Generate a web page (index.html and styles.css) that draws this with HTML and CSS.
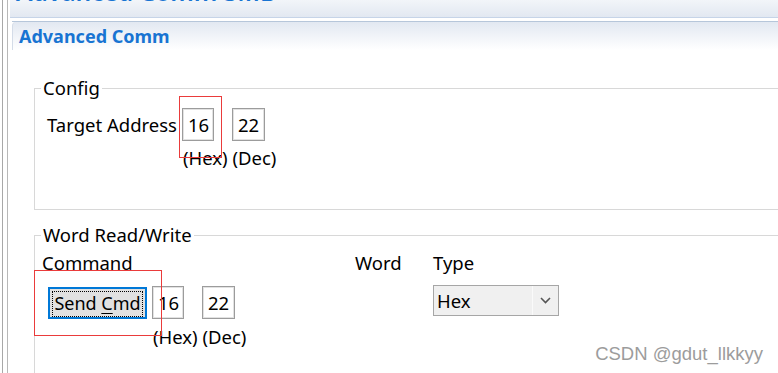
FILE: index.html
```html
<!DOCTYPE html>
<html lang="en">
<head>
  <meta charset="UTF-8" />
  <meta name="viewport" content="width=device-width, initial-scale=1.0"/>
  <title>Advanced Comm SMB</title>
  <link rel="stylesheet" href="styles.css">
</head>
<body>
  <div class="window">
    <div class="main">
      <div class="titlebar"><h1>Advanced Comm SMB</h1></div>

      <div class="section">
        <div class="section-head">Advanced Comm</div>

        <fieldset class="group config">
          <legend>Config</legend>
          <div class="addr-row">
            <span class="addr-label">Target Address</span>
            <span class="box hex">16</span>
            <span class="box dec">22</span>
          </div>
          <div class="units addr-units">(Hex) (Dec)</div>
        </fieldset>

        <fieldset class="group words">
          <legend>Word Read/Write</legend>
          <div class="word-grid">
            <span class="head">Command</span>
            <span class="head">Word</span>
            <span class="head">Type</span>

            <div class="cmd-cell">
              <button class="send-btn"><span class="focus">Send <u>C</u>md</span></button>
              <span class="box hex">16</span>
              <span class="box dec">22</span>
            </div>
            <span></span>
            <div class="combo">
              <span class="combo-text">Hex</span>
              <span class="combo-arrow">
                <svg width="11" height="7" viewBox="0 0 11 7"><path d="M1 1 L5.5 5.5 L10 1" fill="none" stroke="#555" stroke-width="1.6"/></svg>
              </span>
            </div>

            <div class="units cmd-units">(Hex) (Dec)</div>
          </div>
        </fieldset>
      </div>
    </div>
  </div>

  <!-- red marks drawn over the screenshot -->
  <div class="mark mark-addr"></div>
  <div class="mark mark-cmd"></div>

  <div class="watermark">CSDN @gdut_llkkyy</div>
</body>
</html>
```

FILE: styles.css
```css
body {
  margin: 0;
  height: 373px;
  overflow: hidden;
  background: #fff;
  font-family: 'Noto Sans', 'Open Sans', sans-serif;
  color: #000;
  position: relative;
}

.window {
  margin-left: 2px;
  height: 373px;
  border-left: 1px solid #a8a8a8;
}

.main {
  margin-left: 4px;
  height: 373px;
  border-left: 1px solid #b8b8b8;
  overflow: hidden;
}

.titlebar {
  margin-left: 2px;
  height: 17px;
  border-bottom: 1px solid #c6d4e8;
  background: linear-gradient(#f2f5f9, #e2e8f1);
  overflow: hidden;
}

.titlebar h1 {
  margin: -23px 0 0 6px;
  font-size: 24.5px;
  line-height: 30px;
  font-weight: 600;
  color: #1874d2;
  white-space: nowrap;
}

.section {
  margin: 3px 0 0 4px;
  border-top: 1px solid #b6c6da;
}

.section-head {
  height: 28px;
  padding-left: 6px;
  border-top-left-radius: 4px;
  border-left: 1px solid #d4dce8;
  background: linear-gradient(#e2e8f1, #ffffff);
  font-size: 18px;
  line-height: 28px;
  font-weight: bold;
  color: #1874d2;
}

.group {
  margin: 0 -40px 0 22px;
  padding: 0;
  border: 1px solid #d8d8d8;
  font-size: 18.5px;
}

.group legend {
  margin-left: 6px;
  padding: 0 2px;
  line-height: 20px;
}

.config {
  margin-top: 28px;
  height: 130px;
}

.words {
  margin-top: 15px;
  height: 160px;
}

.addr-row {
  display: flex;
  align-items: center;
  margin-top: 10px;
  padding-left: 12px;
}

.addr-label {
  width: 135px;
}

.box {
  box-sizing: border-box;
  height: 33px;
  padding-left: 5px;
  border: 1px solid #9c9c9c;
  box-shadow: inset 0 0 0 1px #e2e2e2;
  line-height: 31px;
}

.box.hex {
  width: 32px;
}

.box.dec {
  width: 33px;
  margin-left: 18px;
}

.units {
  line-height: 20px;
}

.addr-units {
  margin: 7px 0 0 148px;
}

.word-grid {
  display: grid;
  grid-template-columns: 313px 78px 1fr;
  margin-top: 8px;
  padding-left: 7px;
}

.head {
  line-height: 20px;
}

.cmd-cell {
  display: flex;
  align-items: center;
  margin-top: 13px;
  padding-left: 6px;
}

.send-btn {
  box-sizing: border-box;
  width: 99px;
  height: 32px;
  margin-right: 5px;
  padding: 2px;
  border: 2px solid #0078d7;
  background: #e1e1e1;
  font-family: inherit;
  font-size: 18px;
  color: #000;
}

.send-btn .focus {
  display: block;
  height: 24px;
  border: 1px dotted #000;
  line-height: 23px;
}

.send-btn u {
  text-underline-offset: 3px;
}

.combo {
  box-sizing: border-box;
  display: flex;
  width: 126px;
  height: 31px;
  margin-top: 12px;
  border: 1px solid #a6a6a6;
  background: #f0f0f0;
}

.combo-text {
  flex: 1;
  padding-left: 3px;
  line-height: 29px;
}

.combo-arrow {
  display: flex;
  align-items: center;
  justify-content: center;
  width: 25px;
  border-left: 1px solid #fafafa;
}

.cmd-units {
  grid-column: 1;
  margin-top: 8px;
  padding-left: 111px;
}

.mark {
  position: absolute;
  border: 1px solid #ea3b3b;
}

.mark-addr {
  left: 179px;
  top: 96px;
  width: 41px;
  height: 60px;
}

.mark-cmd {
  left: 34px;
  top: 270px;
  width: 126px;
  height: 64px;
}

.watermark {
  position: absolute;
  right: 15px;
  bottom: 8px;
  font-family: 'Liberation Sans', sans-serif;
  font-size: 18.5px;
  color: #9c9c9c;
}
```
